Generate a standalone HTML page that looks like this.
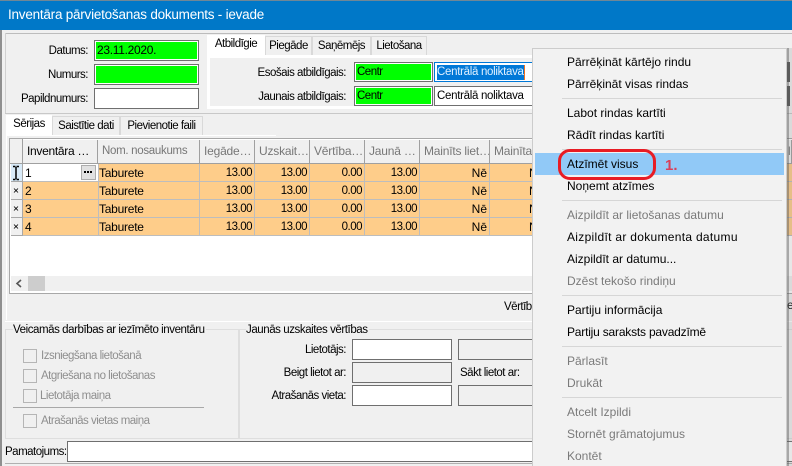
<!DOCTYPE html>
<html><head><meta charset="utf-8">
<style>
html,body{margin:0;padding:0}
body{width:792px;height:466px;overflow:hidden;position:relative;background:#f0f0f0;font:12px "Liberation Sans",sans-serif;color:#000}
div,span{position:absolute;box-sizing:border-box;white-space:nowrap}
.t{line-height:16px;height:16px}
.s{font-size:11.5px;letter-spacing:-.5px}
.r{text-align:right}
.in{border:1px solid #6f6f6f;background:#fff}
.gr{border:1px solid #6f6f6f;background:#0f0;box-shadow:inset 0 0 0 1px #fff}
.tab{background:#f0f0f0;border:1px solid #d9d9d9;border-bottom:0;line-height:18px;text-align:center;font-size:11.500px;letter-spacing:-.5px}
.h{background:#f0f0f0;border-right:1px solid #a0a0a0;border-bottom:1px solid #a0a0a0;height:24px;line-height:23px;top:140px;color:#777;padding-left:4px;overflow:hidden;letter-spacing:-.2px}
.row{left:23px;width:769px;height:18px;background:#fecd8a;border-bottom:1px solid #bdbdbd}
.v{width:1px;background:#bdbdbd;top:164px;height:72px}
.m{left:567px;line-height:16px;height:16px;color:#000}
.g{color:#7a7a7a}
.ms{left:562px;width:220px;height:1px;background:#d6d6d6}
.c{width:14px;height:14px;left:23px;border:1px solid #b5b5b5}
.l{color:#8f8f8f}
</style></head><body>
<div style="left:0;top:0;width:792px;height:30px;background:#0078c8;border-top:1px solid #6f8796"></div>
<div style="left:8px;top:6px;color:#fff;font-size:13.5px;line-height:18px;letter-spacing:-.23px">Inventāra pārvietošanas dokuments - ievade</div>
<div style="left:0;top:30px;width:2px;height:436px;background:#8f8f8f"></div>
<div style="left:5px;top:33px;width:787px;height:1px;background:#bcbcbc"></div>
<div style="left:5px;top:33px;width:1px;height:80px;background:#d0d0d0"></div>
<div style="left:5px;top:113px;width:787px;height:1px;background:#c8c8c8"></div>

<div class="t r s" style="left:20px;width:68px;top:43px">Datums:</div>
<div class="t r s" style="left:20px;width:68px;top:67px">Numurs:</div>
<div class="t r s" style="left:10px;width:78px;top:91px">Papildnumurs:</div>
<div class="gr" style="left:94px;top:40px;width:105px;height:21px"></div>
<div class="t" style="left:97px;top:42px;letter-spacing:-.3px">23.11.2020.</div>
<div class="gr" style="left:94px;top:64px;width:105px;height:21px"></div>
<div class="in" style="left:94px;top:88px;width:105px;height:21px"></div>

<div style="left:207px;top:55px;width:330px;height:54px;background:#fff"></div>
<div style="left:210px;top:58px;width:330px;height:48px;background:#f0f0f0"></div>
<div class="tab" style="left:265px;top:36px;width:47px;height:19px">Piegāde</div>
<div class="tab" style="left:312px;top:36px;width:59px;height:19px">Saņēmējs</div>
<div class="tab" style="left:371px;top:36px;width:56px;height:19px">Lietošana</div>
<div class="s" style="left:207px;top:35px;width:58px;height:21px;background:#fff;line-height:18px;text-align:center">Atbildīgie</div>
<div class="t r s" style="left:220px;width:126px;top:65px">Esošais atbildīgais:</div>
<div class="t r s" style="left:220px;width:126px;top:89px">Jaunais atbildīgais:</div>
<div class="gr" style="left:354px;top:62px;width:79px;height:20px"></div>
<div class="t s" style="left:357px;top:64px">Centr</div>
<div class="gr" style="left:354px;top:86px;width:79px;height:20px"></div>
<div class="t s" style="left:357px;top:88px">Centr</div>
<div style="left:434px;top:62px;width:110px;height:20px;background:#fff;border:1px solid #0078d7"></div>
<div class="t" style="left:437px;top:65px;height:15px;width:87px;background:#0078d7;color:#dff0ff;line-height:14px;font-size:11.5px;letter-spacing:-.3px">Centrālā noliktava</div>
<div style="left:524px;top:65px;width:1px;height:15px;background:#f07020"></div>
<div style="left:434px;top:86px;width:110px;height:20px;background:#fff;border:1px solid #6f6f6f"></div>
<div class="t" style="left:437px;top:88px;font-size:11.5px;letter-spacing:-.3px">Centrālā noliktava</div>

<div style="left:6px;top:135px;width:786px;height:165px;background:#f0f0f0"></div>
<div class="tab" style="left:52px;top:116px;width:68px;height:19px">Saistītie dati</div>
<div class="tab" style="left:120px;top:116px;width:83px;height:19px">Pievienotie faili</div>
<div class="s" style="left:6px;top:115px;width:46px;height:21px;background:#fff;line-height:18px;text-align:center">Sērijas</div>
<div style="left:6px;top:135px;width:270px;height:1px;background:#fff"></div>
<div style="left:6px;top:136px;width:1px;height:184px;background:#fff"></div>

<div style="left:9px;top:138px;width:783px;height:156px;background:#fff;border:1px solid #a8a8a8;border-right:0"></div>
<div style="left:10px;top:139px;width:13px;height:25px;background:#f0f0f0;border-right:1px solid #a0a0a0;border-bottom:1px solid #a0a0a0"></div>
<div class="h" style="left:23px;width:75px;color:#000;letter-spacing:-.3px">Inventāra …</div>
<div class="h s" style="left:98px;width:102px;letter-spacing:-.3px">Nom. nosaukums</div>
<div class="h" style="left:200px;width:55px">Iegāde…</div>
<div class="h" style="left:255px;width:55px">Uzskait…</div>
<div class="h" style="left:310px;width:55px">Vērtība…</div>
<div class="h" style="left:365px;width:55px">Jaunā …</div>
<div class="h" style="left:420px;width:70px">Mainīts liet…</div>
<div class="h" style="left:490px;width:50px">Mainīta…</div>
<div class="h" style="left:780px;width:12px;border-left:1px solid #a0a0a0;padding-left:7px">li</div>

<div class="row" style="top:164px"></div>
<div class="row" style="top:182px"></div>
<div class="row" style="top:200px"></div>
<div class="row" style="top:218px"></div>
<div style="left:23px;top:164px;width:75px;height:17px;background:#fff"></div>
<div style="left:81px;top:165px;width:15px;height:15px;background:#e1e1e1;border:1px solid #adadad"></div>
<div style="left:84px;top:171px;width:2px;height:2px;background:#000"></div>
<div style="left:87px;top:171px;width:2px;height:2px;background:#000"></div>
<div style="left:90px;top:171px;width:2px;height:2px;background:#000"></div>

<div style="left:11px;top:164px;width:12px;height:18px;background:#d9ebf9;border:1px solid #a8a8a8;border-width:0 1px 1px 0"></div>
<div style="left:11px;top:182px;width:12px;height:18px;background:#f0f0f0;border:1px solid #a8a8a8;border-width:0 1px 1px 0"></div>
<div style="left:11px;top:200px;width:12px;height:18px;background:#f0f0f0;border:1px solid #a8a8a8;border-width:0 1px 1px 0"></div>
<div style="left:11px;top:218px;width:12px;height:18px;background:#f0f0f0;border:1px solid #a8a8a8;border-width:0 1px 1px 0"></div>
<svg style="position:absolute;left:11px;top:164px" width="12" height="72" fill="none" stroke="#000">
<path d="M2 2.500h2.500M5.500 2.500h2.500M5 3v12M2 15.500h2.500M5.500 15.500h2.500" stroke-width="1.500"/>
<path d="M3 24.500l2 2 2-2M3 28.500l2-2 2 2M3 42.500l2 2 2-2M3 46.500l2-2 2 2M3 60.500l2 2 2-2M3 64.500l2-2 2 2" stroke-width=".8"/>
</svg>
<div class="v" style="left:98px"></div><div class="v" style="left:199px"></div><div class="v" style="left:254px"></div><div class="v" style="left:309px"></div><div class="v" style="left:364px"></div><div class="v" style="left:419px"></div><div class="v" style="left:489px"></div>

<div class="t" style="left:25px;top:165px">1</div><div class="t" style="left:25px;top:183px">2</div><div class="t" style="left:25px;top:201px">3</div><div class="t" style="left:25px;top:219px">4</div>
<div class="t" style="left:99px;top:165px;letter-spacing:-.25px">Taburete</div><div class="t" style="left:99px;top:183px;letter-spacing:-.25px">Taburete</div><div class="t" style="left:99px;top:201px;letter-spacing:-.25px">Taburete</div><div class="t" style="left:99px;top:219px;letter-spacing:-.25px">Taburete</div>
<div class="t r s" style="left:200px;width:52px;top:165px">13.00</div><div class="t r s" style="left:200px;width:52px;top:183px">13.00</div><div class="t r s" style="left:200px;width:52px;top:201px">13.00</div><div class="t r s" style="left:200px;width:52px;top:219px">13.00</div>
<div class="t r s" style="left:255px;width:52px;top:165px">13.00</div><div class="t r s" style="left:255px;width:52px;top:183px">13.00</div><div class="t r s" style="left:255px;width:52px;top:201px">13.00</div><div class="t r s" style="left:255px;width:52px;top:219px">13.00</div>
<div class="t r s" style="left:310px;width:52px;top:165px">0.00</div><div class="t r s" style="left:310px;width:52px;top:183px">0.00</div><div class="t r s" style="left:310px;width:52px;top:201px">0.00</div><div class="t r s" style="left:310px;width:52px;top:219px">0.00</div>
<div class="t r s" style="left:365px;width:52px;top:165px">13.00</div><div class="t r s" style="left:365px;width:52px;top:183px">13.00</div><div class="t r s" style="left:365px;width:52px;top:201px">13.00</div><div class="t r s" style="left:365px;width:52px;top:219px">13.00</div>
<div class="t r" style="left:420px;width:67px;top:165px">Nē</div><div class="t r" style="left:420px;width:67px;top:183px">Nē</div><div class="t r" style="left:420px;width:67px;top:201px">Nē</div><div class="t r" style="left:420px;width:67px;top:219px">Nē</div>
<div class="t" style="left:529px;top:165px">N</div><div class="t" style="left:529px;top:183px">N</div><div class="t" style="left:529px;top:201px">N</div><div class="t" style="left:529px;top:219px">N</div>

<div style="left:11px;top:276px;width:781px;height:15px;background:#f0f0f0"></div>
<div style="left:28px;top:276px;width:17px;height:15px;background:#cdcdcd"></div>
<svg style="position:absolute;left:15px;top:279px" width="8" height="9" fill="none" stroke="#555" stroke-width="1.600"><path d="M6 1L2 4.500L6 8"/></svg>
<div class="t s" style="left:504px;top:299px">Vērtība</div>
<div class="t" style="left:787px;top:297px">er</div>

<div style="left:5px;top:321px;width:787px;height:1px;background:#fff"></div>
<div style="left:5px;top:329px;width:234px;height:110px;border:1px solid #dedede"></div>
<div style="left:239px;top:329px;width:553px;height:110px;border:1px solid #dedede;border-right:0"></div>
<div class="t s" style="left:13px;top:322px;background:#f0f0f0;padding-right:1px;letter-spacing:-.43px">Veicamās darbības ar iezīmēto inventāru</div>
<div class="t s" style="left:246px;top:322px;background:#f0f0f0;padding-right:1px;letter-spacing:-.43px">Jaunās uzskaites vērtības</div>

<div class="c" style="top:349px"></div><div class="t s l" style="left:41px;top:348px">Izsniegšana lietošanā</div>
<div class="c" style="top:369px"></div><div class="t s l" style="left:41px;top:368px">Atgriešana no lietošanas</div>
<div class="c" style="top:389px"></div><div class="t s l" style="left:40px;top:388px">Lietotāja maiņa</div>
<div style="left:13px;top:407px;width:191px;height:1px;background:#a8a8a8"></div>
<div class="c" style="top:414px"></div><div class="t s l" style="left:41px;top:413px">Atrašanās vietas maiņa</div>

<div class="t r s" style="left:250px;width:96px;top:342px">Lietotājs:</div>
<div class="t r s" style="left:250px;width:96px;top:365px">Beigt lietot ar:</div>
<div class="t r s" style="left:250px;width:96px;top:388px">Atrašanās vieta:</div>
<div class="in" style="left:352px;top:339px;width:100px;height:21px"></div>
<div class="in" style="left:352px;top:362px;width:100px;height:21px;background:#f0f0f0"></div>
<div class="in" style="left:352px;top:385px;width:100px;height:21px"></div>
<div class="in" style="left:458px;top:339px;width:90px;height:21px;background:#f0f0f0"></div>
<div class="in" style="left:458px;top:385px;width:90px;height:21px;background:#f0f0f0"></div>
<div class="t s" style="left:460px;top:365px">Sākt lietot ar:</div>

<div class="t s" style="left:5px;top:444px">Pamatojums:</div>
<div style="left:67px;top:441px;width:725px;height:21px;background:#fff;border:1px solid #6f6f6f;border-right:0"></div>
<div style="left:5px;top:463px;width:787px;height:1px;background:#b0b0b0"></div>

<div style="left:787px;top:62px;width:3px;height:20px;background:#555"></div>
<div style="left:787px;top:86px;width:3px;height:20px;background:#555"></div>
<div style="left:787px;top:48px;width:5px;height:418px;background:rgba(120,120,120,.18)"></div>
<div style="left:787px;top:48px;width:2px;height:418px;background:rgba(90,90,90,.45)"></div>

<div style="left:532px;top:48px;width:255px;height:418px;background:#f2f2f2;border:1px solid #ccc;border-bottom:0"></div>
<div class="m" style="top:54px">Pārrēķināt kārtējo rindu</div>
<div class="m" style="top:76px">Pārrēķināt visas rindas</div>
<div class="ms" style="top:98px"></div>
<div class="m" style="top:105px">Labot rindas kartīti</div>
<div class="m" style="top:127px">Rādīt rindas kartīti</div>
<div class="ms" style="top:149px"></div>
<div style="left:535px;top:153px;width:249px;height:22px;background:#91c9f7"></div>
<div class="m" style="top:156px">Atzīmēt visus</div>
<div style="left:558px;top:149px;width:98px;height:31px;border:3px solid #e81c24;border-radius:12px"></div>
<div style="left:665px;top:158px;color:#d9405a;font-size:15px;line-height:16px;font-weight:bold">1.</div>
<div class="m" style="top:178px">Noņemt atzīmes</div>
<div class="ms" style="top:200px"></div>
<div class="m g" style="top:207px">Aizpildīt ar lietošanas datumu</div>
<div class="m" style="top:229px;letter-spacing:.3px">Aizpildīt ar dokumenta datumu</div>
<div class="m" style="top:251px">Aizpildīt ar datumu...</div>
<div class="m g" style="top:273px">Dzēst tekošo rindiņu</div>
<div class="ms" style="top:295px"></div>
<div class="m" style="top:302px">Partiju informācija</div>
<div class="m" style="top:324px;letter-spacing:-.2px">Partiju saraksts pavadzīmē</div>
<div class="ms" style="top:346px"></div>
<div class="m g" style="top:353px">Pārlasīt</div>
<div class="m g" style="top:375px">Drukāt</div>
<div class="ms" style="top:397px"></div>
<div class="m g" style="top:404px">Atcelt Izpildi</div>
<div class="m g" style="top:426px">Stornēt grāmatojumus</div>
<div class="m g" style="top:448px">Kontēt</div>
</body></html>
